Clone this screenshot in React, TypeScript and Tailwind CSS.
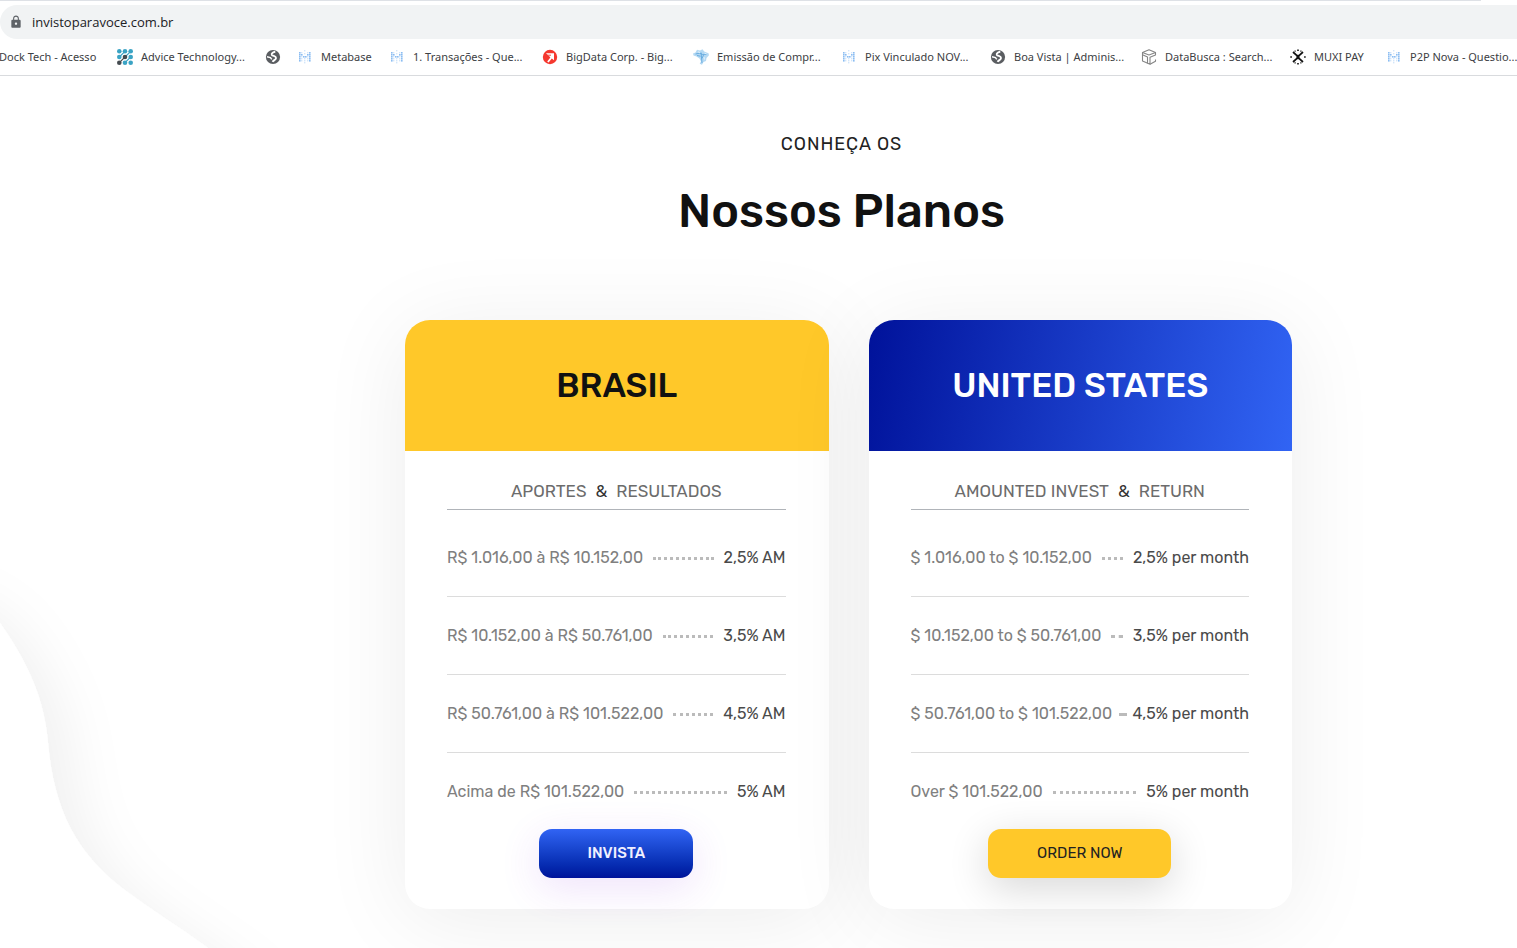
import type { ReactNode } from 'react';
import { MdLock } from 'react-icons/md';

const METABASE_STRONG = [
  [2, 3], [2, 5], [2, 7], [2, 9], [2, 11],
  [12, 3], [12, 5], [12, 7], [12, 9], [12, 11],
  [4, 5], [6, 7], [8, 7], [10, 5],
];
const METABASE_FAINT = [
  [4, 3], [7, 1], [7, 4], [10, 3], [4, 7], [10, 7], [4, 9], [7, 9], [10, 9],
  [4, 11], [7, 11], [7, 13], [10, 11],
];

function MetabaseIcon() {
  return (
    <svg viewBox="0 0 16 16" className="size-4 shrink-0" aria-hidden="true">
      {METABASE_FAINT.map(([x, y]) => (
        <rect key={`${x}-${y}`} x={x} y={y} width="1.4" height="1.4" fill="#d3e6fa" />
      ))}
      {METABASE_STRONG.map(([x, y]) => (
        <rect key={`${x}-${y}`} x={x} y={y} width="1.6" height="1.6" fill="#8bbdf2" />
      ))}
    </svg>
  );
}

function AdviceIcon() {
  const at = [2.3, 8, 13.7];
  const dark = ['1-1', '0-2'];
  return (
    <svg viewBox="0 0 16 16" className="size-4 shrink-0" aria-hidden="true">
      <path d="M2.3 8L8 2.3M8 8L13.7 2.3M8 13.7L13.7 8" stroke="#3aa3c4" strokeWidth="1.1" />
      <path d="M2.3 13.7L8 8" stroke="#444b50" strokeWidth="1.1" />
      {at.map((y, row) =>
        at.map((x, col) => (
          <circle
            key={`${col}-${row}`}
            cx={x}
            cy={y}
            r="2.3"
            fill={dark.includes(`${col}-${row}`) ? '#444b50' : '#3aa3c4'}
          />
        )),
      )}
    </svg>
  );
}

function GlobeIcon() {
  return (
    <svg viewBox="0 0 16 16" className="size-4 shrink-0" fill="none" aria-hidden="true">
      <circle cx="8" cy="8" r="7.1" fill="#5a5d61" />
      <path
        d="M10.300 2.800C8.500 3 6.200 4.200 6.800 5.800C7.500 7.300 11 6.700 11 8.900C11 10.900 8.600 11 7.600 12.900"
        stroke="#fff"
        strokeWidth="1.9"
      />
      <path d="M2 7.800L5.400 8.600L6.800 10.400" stroke="#fff" strokeWidth="1.5" />
    </svg>
  );
}

function BigDataIcon() {
  return (
    <svg viewBox="0 0 16 16" className="size-4 shrink-0" aria-hidden="true">
      <circle cx="8" cy="8" r="7.2" fill="#f5382f" />
      <path d="M4 4.300h8v7l-2.200-1.800-3.200 4-1.400-1.100 3.200-4z" fill="#fff" />
      <path d="M4.500 6.200h4.500M4 8.100h3.600" stroke="#f5382f" strokeWidth=".9" />
    </svg>
  );
}

function BrazilIcon() {
  return (
    <svg viewBox="0 0 16 16" className="size-4 shrink-0" aria-hidden="true">
      <path d="M0 4.500l2.500-1L4 .8l3 .6L9.500.3l1.700 2.200 4.300 1.700.5 2L13.500 9l-.5 3-2.500 1-1.500 2.800-2.300-1 1.300-2.300L6.500 9.500 3.500 7.500.5 6.500z" fill="#b5d9f3" />
      <path d="M2.500 5l4-.8 3 1.300 4-.3M8 3.500l.6 5.500.4 5M10.500 6L9 9.500M4 6.500l3.500.7" stroke="#56a1da" strokeWidth=".8" fill="none" />
      <path d="M5 2.800l2 .8M11.500 4.300l2 .4M11 8l.5 2.500" stroke="#edf7fe" strokeWidth=".8" fill="none" />
    </svg>
  );
}

function CubeIcon() {
  return (
    <svg viewBox="0 0 16 16" className="size-4 shrink-0" fill="none" stroke="#858585" strokeWidth="1.1" strokeLinejoin="round" aria-hidden="true">
      <path d="M8 .8L14.500 3.500V6L9 8.300v7L1.500 12V3.500z" />
      <path d="M1.500 3.500L8 6l6.500-2.500M1.500 5.800L6.500 8v6.500M9 15.300l5.500-3v-1.800" />
    </svg>
  );
}

function MuxiIcon() {
  return (
    <svg viewBox="0 0 16 16" className="size-4 shrink-0" fill="#111" aria-hidden="true">
      <path d="M3 3l4 3.600h2L13 3M3 13l4-3.600h2L13 13M7.200 6.500v3M8.800 6.500v3" stroke="#111" strokeWidth="1.700" fill="none" />
      <path d="M7.200.5h1.600v1.600H7.200zM7.200 13.900h1.600v1.600H7.200zM.3 7.200h1.600v1.600H.3zM14.100 7.200h1.600v1.600h-1.600zM4.500 1.500h1.200v1.200H4.500zM10.300 1.500h1.200v1.200h-1.200zM4.500 13.300h1.200v1.200H4.500zM10.300 13.300h1.200v1.200h-1.200z" />
    </svg>
  );
}

type Bookmark = { label: string; width: string; icon?: ReactNode };

const bookmarks: Bookmark[] = [
  { label: 'Dock Tech - Acesso', width: 'w-[102px]' },
  { label: 'Advice Technology...', width: 'w-[108px]', icon: <AdviceIcon /> },
  { label: '', width: '', icon: <GlobeIcon /> },
  { label: 'Metabase', width: 'w-[52px]', icon: <MetabaseIcon /> },
  { label: '1. Transações - Que...', width: 'w-[113px]', icon: <MetabaseIcon /> },
  { label: 'BigData Corp. - Big...', width: 'w-[111px]', icon: <BigDataIcon /> },
  { label: 'Emissão de Compr...', width: 'w-[108px]', icon: <BrazilIcon /> },
  { label: 'Pix Vinculado NOV...', width: 'w-[109px]', icon: <MetabaseIcon /> },
  { label: 'Boa Vista | Adminis...', width: 'w-[111px]', icon: <GlobeIcon /> },
  { label: 'DataBusca : Search...', width: 'w-[109px]', icon: <CubeIcon /> },
  { label: 'MUXI PAY', width: 'w-[56px]', icon: <MuxiIcon /> },
  { label: 'P2P Nova - Questio...', width: 'w-[112px]', icon: <MetabaseIcon /> },
];

function BrowserBar() {
  return (
    <header className="overflow-hidden border-b border-[#d9dbde] bg-white">
      <div className="mr-9 h-px bg-[#dee1e6]" />
      <label className="-mr-6 mt-1 flex h-[34px] items-center gap-[9px] rounded-full bg-[#f1f3f4] pl-[9px] font-['Open_Sans','Noto_Sans',sans-serif]">
        <MdLock className="size-[14px] text-[#5f6368]" aria-hidden="true" />
        <input
          type="text"
          aria-label="Address"
          defaultValue="invistoparavoce.com.br"
          className="min-w-0 grow bg-transparent text-[13px] leading-5 text-[#202124] outline-none"
        />
      </label>
      <nav aria-label="Bookmarks" className="-ml-px flex h-9 items-center gap-4 font-['Noto_Sans','Open_Sans',sans-serif]">
        {bookmarks.map((b, i) => (
          <a
            key={i}
            href="#"
            aria-label={b.label || 'Bookmark'}
            className="flex shrink-0 items-center gap-2 whitespace-nowrap text-[11px] leading-4 text-[#3c4043]"
          >
            {b.icon}
            {b.label && <span className={b.width}>{b.label}</span>}
          </a>
        ))}
      </nav>
    </header>
  );
}

function Backdrop() {
  return (
    <svg viewBox="0 0 320 400" className="pointer-events-none absolute bottom-0 left-0 h-[400px] w-[320px]" aria-hidden="true">
      <defs>
        <filter id="soft" filterUnits="userSpaceOnUse" x="-300" y="-200" width="800" height="900">
          <feDropShadow dx="24" dy="18" stdDeviation="26" floodColor="#000" floodOpacity="0.055" />
        </filter>
      </defs>
      <path
        d="M-120 20C-60 30-25 40 0 75C28 115 44 150 48 195C54 262 76 304 122 340C150 361 178 378 208 400L250 430L-120 560Z"
        fill="#fff"
        filter="url(#soft)"
      />
    </svg>
  );
}

type Plan = {
  name: string;
  left: string;
  right: string;
  rows: [string, string][];
  headClass: string;
  action: string;
  actionClass: string;
};

const plans: Plan[] = [
  {
    name: 'BRASIL',
    left: 'APORTES',
    right: 'RESULTADOS',
    rows: [
      ['R$ 1.016,00 à R$ 10.152,00', '2,5% AM'],
      ['R$ 10.152,00 à R$ 50.761,00', '3,5% AM'],
      ['R$ 50.761,00 à R$ 101.522,00', '4,5% AM'],
      ['Acima de R$ 101.522,00', '5% AM'],
    ],
    headClass: 'bg-[#ffc829] text-[#111]',
    action: 'INVISTA',
    actionClass:
      'min-w-[154px] bg-linear-to-b from-[#3164f4] to-[#00129a] font-medium text-[#f0f0ff] shadow-[0_10px_40px_rgba(140,50,230,0.14)]',
  },
  {
    name: 'UNITED STATES',
    left: 'AMOUNTED INVEST',
    right: 'RETURN',
    rows: [
      ['$ 1.016,00 to $ 10.152,00', '2,5% per month'],
      ['$ 10.152,00 to $ 50.761,00', '3,5% per month'],
      ['$ 50.761,00 to $ 101.522,00', '4,5% per month'],
      ['Over $ 101.522,00', '5% per month'],
    ],
    headClass: 'bg-linear-[100deg] from-[#00129a] to-[#3164f4] text-white',
    action: 'ORDER NOW',
    actionClass: 'min-w-[183px] bg-[#ffc829] text-[#222] shadow-[0_10px_40px_rgba(0,0,0,0.16)]',
  },
];

function PlanCard({ plan }: { plan: Plan }) {
  return (
    <article className="flex-1 rounded-[25px] bg-white shadow-[0_10px_90px_rgba(0,0,0,0.075)]">
      <h2 className={`rounded-t-[25px] py-11 text-center text-[34px] leading-[43px] font-medium ${plan.headClass}`}>
        {plan.name}
      </h2>
      <div className="pt-7 pr-[43px] pb-[31px] pl-[42px]">
        <h3 className="flex justify-center gap-[9px] border-b border-[#b0b4b9] pb-[6px] text-[17px] leading-6 text-[#6c6c6c]">
          <span>{plan.left}</span>
          <span className="text-[#333]">&amp;</span>
          <span>{plan.right}</span>
        </h3>
        <ul className="pt-[9px]">
          {plan.rows.map(([range, rate]) => (
            <li
              key={range}
              className="flex items-center border-b border-[#dcdcdc] pt-[27px] pb-[26px] text-base leading-6 whitespace-nowrap last:border-b-0 last:pb-[25px]"
            >
              <span className="text-[#808080]">{range}</span>
              <span className="mx-[10px] grow border-b-[3px] border-dotted border-[#bbb]" />
              <span className="text-[#4a4a4a]">{rate}</span>
            </li>
          ))}
        </ul>
        <div className="flex justify-center">
          <button type="button" className={`h-[49px] rounded-[13px] px-10 pb-[2px] text-[15px] leading-6 ${plan.actionClass}`}>
            {plan.action}
          </button>
        </div>
      </div>
    </article>
  );
}

export default function App() {
  return (
    <div className="flex min-h-screen flex-col bg-white">
      <BrowserBar />
      <main className="relative grow overflow-hidden pb-[39px] pl-[180px] font-['Rubik','Roboto',sans-serif]">
        <Backdrop />
        <div className="relative pt-14 pr-[14px] text-center text-[#111]">
          <p className="text-[18px] leading-6 tracking-[1px] text-[#222]">CONHEÇA OS</p>
          <h1 className="mt-6 text-[47px] leading-[62px] font-medium">Nossos Planos</h1>
        </div>
        <div className="relative mx-auto mt-[78px] flex max-w-[887px] gap-10">
          {plans.map((plan) => (
            <PlanCard key={plan.name} plan={plan} />
          ))}
        </div>
      </main>
    </div>
  );
}
